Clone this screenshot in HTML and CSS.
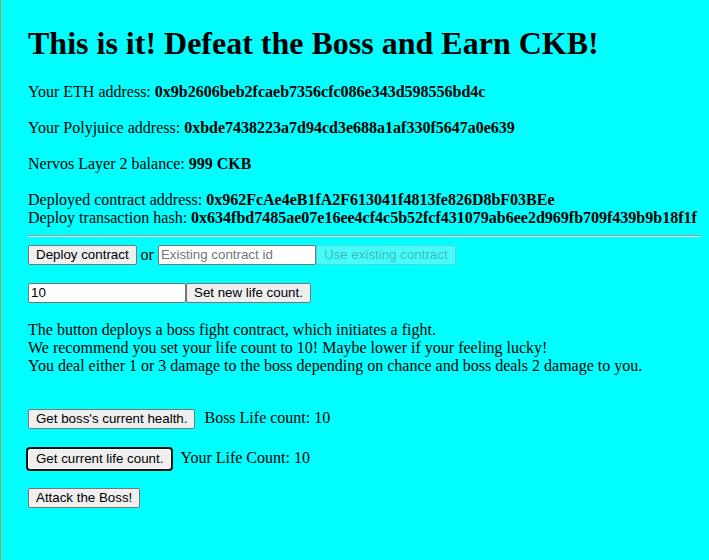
FILE: index.html
```html
<!DOCTYPE html>
<html lang="en">
<head>
<meta charset="utf-8">
<title>Defeat the Boss</title>
<link rel="stylesheet" href="styles.css">
</head>
<body>
<div class="app">
  <h1 class="title">This is it! Defeat the Boss and Earn CKB!</h1>
  <div class="line">Your ETH address: <b>0x9b2606beb2fcaeb7356cfc086e343d598556bd4c</b></div>
  <div class="line gap">Your Polyjuice address: <b>0xbde7438223a7d94cd3e688a1af330f5647a0e639</b></div>
  <div class="line gap">Nervos Layer 2 balance: <b>999 CKB</b></div>
  <div class="line gap">Deployed contract address: <b>0x962FcAe4eB1fA2F613041f4813fe826D8bF03BEe</b></div>
  <div class="line">Deploy transaction hash: <b>0x634fbd7485ae07e16ee4cf4c5b52fcf431079ab6ee2d969fb709f439b9b18f1f</b></div>
  <div class="rule"></div>
  <div class="row"><button class="btn">Deploy contract</button> or <input class="field" type="text" placeholder="Existing contract id"><button class="btn" disabled>Use existing contract</button></div>
  <div class="row gap"><input class="field" type="text" value="10"><button class="btn">Set new life count.</button></div>
  <div class="line gap">The button deploys a boss fight contract, which initiates a fight.</div>
  <div class="line">We recommend you set your life count to 10! Maybe lower if your feeling lucky!</div>
  <div class="line">You deal either 1 or 3 damage to the boss depending on chance and boss deals 2 damage to you.</div>
  <div class="row gap-wide"><button class="btn">Get boss's current health.</button><span class="stat">Boss Life count: 10</span></div>
  <div class="row gap-btn"><button class="btn focused">Get current life count.</button><span class="stat">Your Life Count: 10</span></div>
  <div class="row gap-last"><button class="btn">Attack the Boss!</button></div>
</div>
</body>
</html>
```
FILE: styles.css
```css
html {
  background: #00ffff;
  border-left: 1px solid #a0a050;
  min-height: 100%;
}
body {
  margin: 8px;
  background: #00ffff;
  font-family: "Liberation Serif", "Times New Roman", serif;
  font-size: 16px;
  color: #000;
}
.app {
  padding: 0 0 0 19px;
}
.title {
  font-size: 32px;
  font-weight: bold;
  margin: 16.5px 0 21.44px;
}
.line {
  line-height: 18px;
}
.gap {
  margin-top: 18px;
}
.gap-wide {
  margin-top: 34px;
}
.gap-btn {
  margin-top: 20px;
}
.gap-last {
  margin-top: 19px;
}
.rule {
  margin: 8px -8px 8px 0;
  height: 2px;
  border-top: 1px solid #9a9a9a;
  border-bottom: 1px solid #eeeeee;
  box-sizing: border-box;
}
.row {
  line-height: 18px;
}
.btn {
  font-family: "Liberation Sans", Arial, sans-serif;
  font-size: 13.3333px;
  padding: 1.5px 7px;
  margin: 0;
  background: #efefef;
  color: #000;
  border: 1px solid #767676;
  border-radius: 2px;
}
.btn:disabled {
  background: rgba(239, 239, 239, 0.3);
  color: rgba(16, 16, 16, 0.3);
  border-color: rgba(118, 118, 118, 0.3);
}
.btn.focused {
  outline: 2px solid #101010;
  outline-offset: 0;
  border-color: #fff;
}
.field {
  font-family: "Liberation Sans", Arial, sans-serif;
  font-size: 13.3333px;
  padding: 1.5px 2px;
  margin: 0;
  width: 152px;
  border: 1px solid #767676;
  border-radius: 2px;
  background: #fff;
  color: #000;
}
.field::placeholder {
  color: #757575;
}
.stat {
  margin-left: 9px;
}
```
